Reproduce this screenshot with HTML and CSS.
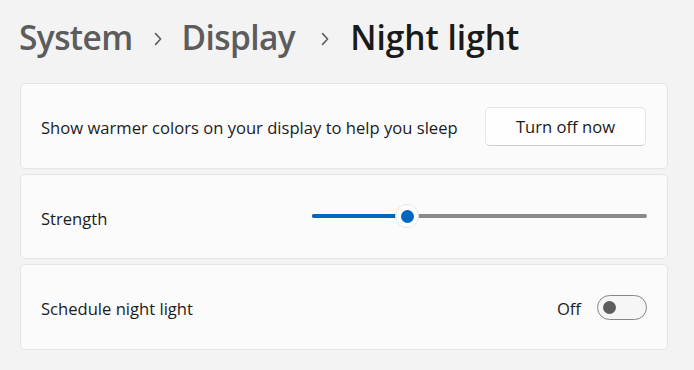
FILE: index.html
```html
<!DOCTYPE html>
<html>
<head>
<meta charset="utf-8">
<link rel="stylesheet" href="styles.css">
</head>
<body>
<div class="page">
  <h1 class="crumbs">
    <span class="crumb">System</span>
    <svg class="chev" width="10" height="14" viewBox="0 0 10 14"><path d="M2.6 1.6 L7.6 7 L2.6 12.4" fill="none" stroke="#606060" stroke-width="1.6" stroke-linecap="round" stroke-linejoin="round"/></svg>
    <span class="crumb">Display</span>
    <svg class="chev chev2" width="10" height="14" viewBox="0 0 10 14"><path d="M2.6 1.6 L7.6 7 L2.6 12.4" fill="none" stroke="#606060" stroke-width="1.6" stroke-linecap="round" stroke-linejoin="round"/></svg>
    <span class="crumb current">Night light</span>
  </h1>
  <div class="cards">
    <div class="card">
      <span class="label">Show warmer colors on your display to help you sleep</span>
      <button class="btn">Turn off now</button>
    </div>
    <div class="card">
      <span class="label">Strength</span>
      <div class="slider">
        <div class="fill" style="width:95px"></div>
        <div class="thumb" style="left:95px"><div class="dot"></div></div>
      </div>
    </div>
    <div class="card">
      <span class="label">Schedule night light</span>
      <div class="toggle-wrap">
        <span class="state">Off</span>
        <div class="toggle"><div class="knob"></div></div>
      </div>
    </div>
  </div>
</div>
</body>
</html>
```
FILE: styles.css
```css
* { box-sizing: border-box; }
html, body { margin: 0; padding: 0; }
body {
  background: #f3f3f3;
  font-family: "Open Sans", "Noto Sans", sans-serif;
  color: #1b1b1b;
  width: 694px;
  height: 370px;
  overflow: hidden;
}
.page { padding: 0 26px 0 20px; }
.crumbs {
  margin: 0 0 0 -1px;
  height: 83px;
  padding-bottom: 10px;
  display: flex;
  align-items: center;
  font-size: 33.5px;
  font-weight: 600;
}
.crumb { color: #5c5c5c; letter-spacing: -0.6px; }
.crumb.current { color: #1a1a1a; letter-spacing: 0; }
.chev { margin: 4px 19px 0 20px; flex: none; }
.chev2 { margin-left: 25px; margin-right: 20px; }
.cards { display: flex; flex-direction: column; gap: 5px; }
.card {
  height: 85.5px;
  background: #fbfbfb;
  border: 1px solid #e5e5e5;
  border-radius: 5px;
  display: flex;
  align-items: center;
  justify-content: space-between;
  padding: 0 20px 0 20px;
}
.label { font-size: 16.6px; color: #1b1b1b; padding-top: 4px; }
.btn {
  width: 161px;
  height: 39px;
  background: #fefefe;
  border: 1px solid #e5e5e5;
  border-bottom-color: #cccccc;
  border-radius: 5px;
  font-family: inherit;
  font-size: 16.6px;
  color: #1b1b1b;
  margin: 1px 1px 0 0;
  padding-top: 1px;
}
.slider {
  position: relative;
  width: 335px;
  height: 4px;
  background: #8a8a8a;
  border-radius: 2px;
  margin-top: 0;
}
.fill { position: absolute; left: 0; top: 0; height: 4px; background: #0067c0; border-radius: 2px; }
.thumb {
  position: absolute;
  top: 2px;
  width: 24px;
  height: 24px;
  margin: -12px 0 0 -12px;
  border-radius: 50%;
  background: #ffffff;
  border: 1px solid #e6e6e6;
  display: flex;
  align-items: center;
  justify-content: center;
}
.dot { width: 13px; height: 13px; border-radius: 50%; background: #0067c0; }
.toggle-wrap { display: flex; align-items: center; gap: 16px; }
.state { font-size: 16.6px; color: #1b1b1b; padding-top: 3px; }
.toggle {
  width: 50px;
  height: 25px;
  border: 1px solid #868686;
  border-radius: 13px;
  background: #f6f6f6;
  display: flex;
  align-items: center;
  padding-left: 5px;
  margin-top: 1px;
}
.knob { width: 13px; height: 13px; border-radius: 50%; background: #5d5d5d; }
```
